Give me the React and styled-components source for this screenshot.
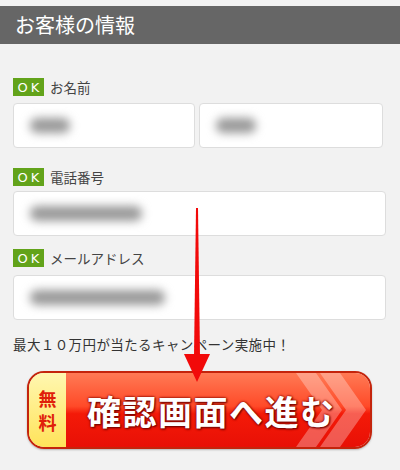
import React from 'react'
import styled, { createGlobalStyle } from 'styled-components'

const Global = createGlobalStyle`
body{
  margin:0;
  background:#f2f2f2;
  font-family:"Noto Sans CJK JP","Noto Sans",sans-serif;
}
`
const Page = styled.div`
position:relative;
width:400px;
height:470px;
padding-top:6px;
box-sizing:border-box;
overflow:hidden;
background:#f2f2f2;
`
const Header = styled.h2`
margin:0;
height:38px;
line-height:38px;
background:#666;
color:#fff;
font-size:20px;
font-weight:400;
padding-left:15px;
`
const Form = styled.div`
padding:34px 14px 0 13px;
`
const Field = styled.div`
display:flex;
flex-direction:column;
gap:${p => p.gap || 6}px;
margin-bottom:${p => p.mb || 14}px;
`
const LabelRow = styled.div`
display:flex;
align-items:center;
gap:6px;
height:18px;
font-size:13.5px;
color:#444;
`
const Ok = styled.span`
display:inline-flex;
align-items:center;
justify-content:center;
width:31px;
height:18px;
background:#62a31a;
color:#fff;
font-family:"DejaVu Sans","Noto Sans",sans-serif;
font-size:13px;
letter-spacing:3px;
padding-left:3px;
box-sizing:border-box;
`
const Pair = styled.div`
display:grid;
grid-template-columns:182px 184px;
gap:4px;
`
const Input = styled.div`
height:45px;
background:#fff;
border:1px solid #ddd;
border-radius:4px;
box-sizing:border-box;
display:flex;
align-items:center;
padding-left:8px;
`
const Blur = styled.span`
display:block;
width:${p => p.w}px;
height:15px;
border-radius:7px;
background:#999;
filter:blur(5px);
margin-left:8px;
`
const Campaign = styled.p`
margin:14px 0 0;
font-size:13.5px;
color:#333;
letter-spacing:0.4px;
`
const Button = styled.div`
position:relative;
margin:17px 0 0 14px;
width:345px;
height:78px;
border:2px solid #c4240c;
border-radius:17px;
box-sizing:border-box;
display:flex;
overflow:hidden;
box-shadow:0 1px 2px rgba(0,0,0,0.25);
`
const Free = styled.div`
width:37px;
background:linear-gradient(#fff7b0,#ffe35a);
display:flex;
flex-direction:column;
align-items:center;
justify-content:center;
color:#e0200a;
font-size:18px;
font-weight:700;
line-height:24px;
`
const Main = styled.div`
position:relative;
flex:1;
background:linear-gradient(#ff7a55 0%,#ff4a28 45%,#f41a08 55%,#e81006 100%);
display:flex;
align-items:center;
padding-left:21px;
color:#fff;
font-size:34px;
font-weight:700;
letter-spacing:1.5px;
text-shadow:0 0 2px #8a0a00,1px 1px 2px #6a0000,0 0 3px #a01000;
`
const Label = styled.span`
position:relative;
z-index:1;
`
const Chevrons = styled.svg`
position:absolute;
right:0;
top:0;
`
const Arrow = styled.svg`
position:absolute;
left:183px;
top:208px;
`

const blurs = (w) => <Blur w={w} />

const App = () => {
  return (
    <Page>
      <Global />
      <Header>お客様の情報</Header>
      <Form>
        <Field gap={7} mb={20}>
          <LabelRow><Ok>OK</Ok>お名前</LabelRow>
          <Pair>
            <Input>{blurs(40)}</Input>
            <Input>{blurs(40)}</Input>
          </Pair>
        </Field>
        <Field gap={5} mb={13}>
          <LabelRow><Ok>OK</Ok>電話番号</LabelRow>
          <Input>{blurs(112)}</Input>
        </Field>
        <Field gap={8} mb={0}>
          <LabelRow><Ok>OK</Ok>メールアドレス</LabelRow>
          <Input>{blurs(135)}</Input>
        </Field>
        <Campaign>最大１０万円が当たるキャンペーン実施中！</Campaign>
        <Button>
          <Free><span>無</span><span>料</span></Free>
          <Main>
            <Chevrons width="80" height="74" viewBox="0 0 80 74">
              <polygon points="6,0 26,0 52,37 26,74 6,74 32,37" fill="rgba(255,255,255,0.3)" />
              <polygon points="30,0 50,0 76,37 50,74 30,74 56,37" fill="rgba(255,255,255,0.3)" />
            </Chevrons>
            <Label>確認画面へ進む</Label>
          </Main>
        </Button>
      </Form>
      <Arrow width="28" height="176" viewBox="0 0 28 176">
        <polygon points="13,0 15,0 17,148 11,148" fill="#f20a0a" />
        <polygon points="1,146 27,146 14,174" fill="#f20a0a" />
      </Arrow>
    </Page>
  )
}

export default App
